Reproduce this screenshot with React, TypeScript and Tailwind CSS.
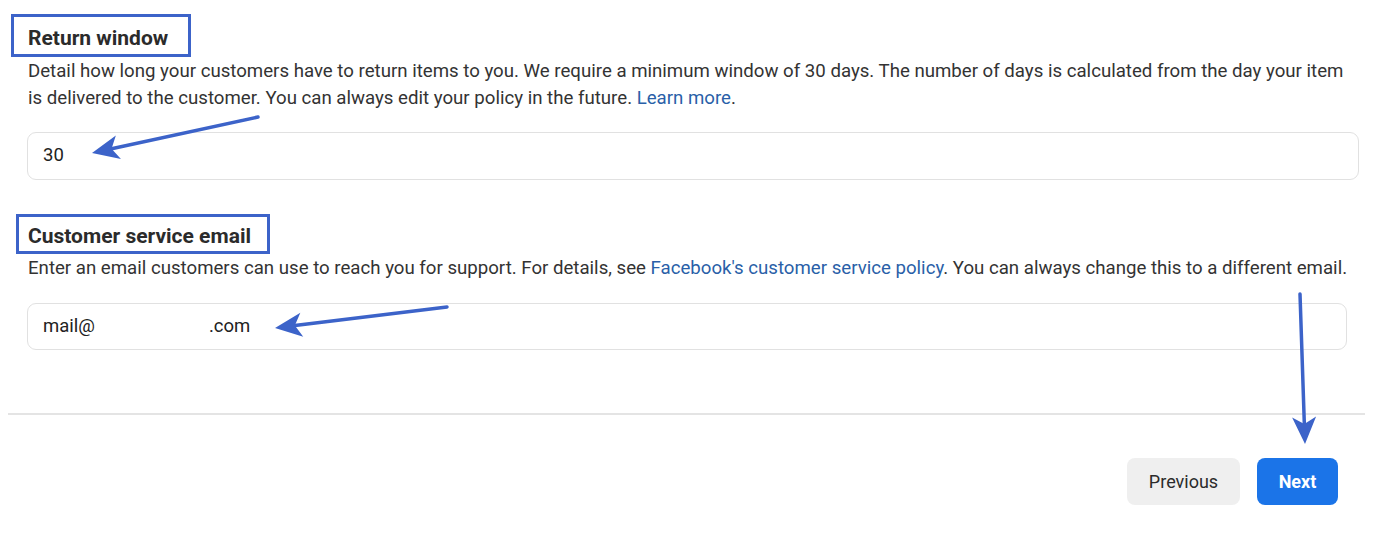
import React from "react";

const ink = "#3c63c9";

function Arrow({ x1, y1, x2, y2 }: { x1: number; y1: number; x2: number; y2: number }) {
  // line from tail (x1,y1) to tip (x2,y2), filled head at the tip
  const dx = x2 - x1;
  const dy = y2 - y1;
  const len = Math.hypot(dx, dy);
  const ux = dx / len;
  const uy = dy / len;
  const headLen = 27;
  const headW = 12;
  const bx = x2 - ux * headLen;
  const by = y2 - uy * headLen;
  const px = -uy;
  const py = ux;
  const pts = `${x2},${y2} ${bx + px * headW},${by + py * headW} ${bx + ux * 7},${by + uy * 7} ${bx - px * headW},${by - py * headW}`;
  return (
    <g>
      <line x1={x1} y1={y1} x2={bx + ux * 7} y2={by + uy * 7} stroke={ink} strokeWidth={3.5} strokeLinecap="round" />
      <polygon points={pts} fill={ink} />
    </g>
  );
}

export default function App() {
  return (
    <div
      className="relative w-[1395px] h-[537px] overflow-hidden bg-white text-[#1c1e21]"
      style={{ fontFamily: "Roboto, 'Liberation Sans', sans-serif" }}
    >
      <div className="pl-[28px] pr-[36px] pt-[26px]">
        <h2 className="text-[21px] leading-[24px] font-bold text-[#2b2b2b]">Return window</h2>
        <p className="mt-[8px] text-[18.65px] leading-[27px] text-[#333] whitespace-nowrap">
          Detail how long your customers have to return items to you. We require a minimum window of 30 days. The number of days is calculated from the day your item
          <br />
          is delivered to the customer. You can always edit your policy in the future.{" "}
          <span className="text-[#2a5fa8]">Learn more</span>.
        </p>
        <div className="mt-[20px] -ml-px h-[48px] rounded-[9px] border border-[#e1e1e1] flex items-center pl-[15px] text-[18.5px] text-[#222]">
          30
        </div>

        <h2 className="mt-[44px] text-[21px] leading-[24px] font-bold text-[#2b2b2b]">Customer service email</h2>
        <p className="mt-[7px] text-[18.65px] leading-[27px] text-[#333] whitespace-nowrap">
          Enter an email customers can use to reach you for support. For details, see{" "}
          <span className="text-[#2a5fa8]">Facebook's customer service policy</span>. You can always change this to a different email.
        </p>
        <div className="mt-[21px] -ml-px mr-[12px] h-[47px] rounded-[9px] border border-[#e1e1e1] flex items-center pl-[15px] text-[18.5px] text-[#222]">
          <span>mail@</span>
          <span className="inline-block w-[114px]" />
          <span>.com</span>
        </div>
      </div>

      <div className="mt-[63px] ml-[8px] mr-[30px] h-[2px] bg-[#e4e4e4]" />

      <div className="mt-[43px] flex justify-end gap-[17px] pr-[57px]">
        <button className="w-[113px] h-[47px] rounded-[8px] bg-[#efefef] text-[18px] text-[#2b2b2b]">Previous</button>
        <button className="w-[81px] h-[47px] rounded-[8px] bg-[#1b74e8] text-[18px] font-bold text-white">Next</button>
      </div>

      {/* annotation overlay */}
      <div className="absolute left-[11px] top-[14px] w-[180px] h-[43px] border-[3px] border-[#3c63c9]" />
      <div className="absolute left-[16px] top-[214px] w-[254px] h-[40px] border-[3px] border-[#3c63c9]" />
      <svg className="absolute inset-0 pointer-events-none" width={1395} height={537}>
        <Arrow x1={258} y1={117} x2={92} y2={153} />
        <Arrow x1={447} y1={307} x2={275} y2={328} />
        <Arrow x1={1300} y1={294} x2={1305} y2={444} />
      </svg>
    </div>
  );
}
